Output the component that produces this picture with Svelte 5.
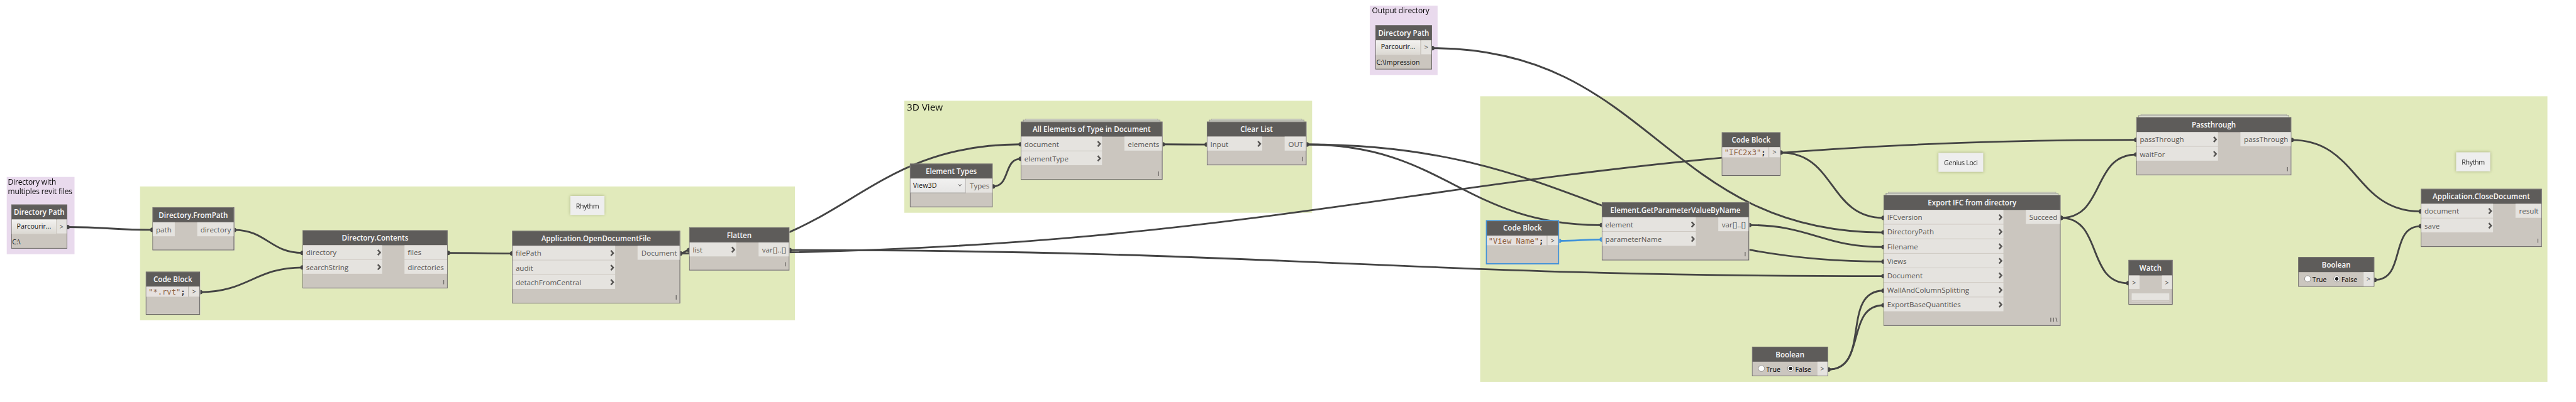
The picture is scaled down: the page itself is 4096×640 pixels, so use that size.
<script>
  // Graph coordinates; the stage scales them to the window.
  const W = 4598, H = 718;

  const groups = [
    { x: 12, y: 316, w: 121, h: 138, tone: 'lilac', title: 'Directory with\nmultiples revit files', pad: 2 },
    { x: 250, y: 333, w: 1169, h: 239, tone: 'green' },
    { x: 1614, y: 180, w: 728, h: 200, tone: 'green', title: '3D View', pad: 4.6, large: true },
    { x: 2445, y: 10, w: 121, h: 124, tone: 'lilac', title: 'Output directory', pad: 4 },
    { x: 2642, y: 172, w: 1905, h: 510, tone: 'green' }
  ];

  const notes = [
    { x: 1018, y: 350, w: 61, h: 34, text: 'Rhythm' },
    { x: 3460, y: 273, w: 80, h: 34, text: 'Genius Loci' },
    { x: 4384, y: 272, w: 61, h: 34, text: 'Rhythm' }
  ];

  const nodes = [
    { kind: 'path', title: 'Directory Path', x: 20, y: 365, w: 100, h: 79, value: 'C:\\' },
    { kind: 'fn', title: 'Directory.FromPath', x: 272, y: 370, w: 146, h: 77, ins: ['path'], inW: 39, outs: ['directory'], outW: 65, plain: true },
    { kind: 'code', title: 'Code Block', x: 260, y: 485, w: 97, h: 77, code: '"*.rvt"', codeW: 75, pad: 4 },
    { kind: 'fn', title: 'Directory.Contents', x: 540, y: 411, w: 259, h: 104, ins: ['directory', 'searchString'], inW: 141, outs: ['files', 'directories'], outW: 76 },
    { kind: 'fn', title: 'Application.OpenDocumentFile', x: 914, y: 412, w: 300, h: 130, ins: ['filePath', 'audit', 'detachFromCentral'], inW: 183, outs: ['Document'], outW: 75 },
    { kind: 'fn', title: 'Flatten', x: 1230, y: 406, w: 179, h: 77, ins: ['list'], inW: 83, outs: ['var[]..[]'], outW: 54 },
    { kind: 'fn', title: 'All Elements of Type in Document', x: 1822, y: 217, w: 253, h: 104, ins: ['document', 'elementType'], inW: 144, outs: ['elements'], outW: 67, stack: true },
    { kind: 'fn', title: 'Clear List', x: 2154, y: 217, w: 178, h: 78, ins: ['Input'], inW: 98, outs: ['OUT'], outW: 38, stack: true },
    { kind: 'select', title: 'Element Types', x: 1624, y: 292, w: 148, h: 78, value: 'View3D', out: 'Types' },
    { kind: 'path', title: 'Directory Path', x: 2455, y: 45, w: 101, h: 79, value: 'C:\\Impression' },
    { kind: 'code', title: 'Code Block', x: 2652, y: 393, w: 131, h: 79, code: '"View Name"', codeW: 107, pad: 2.7, selected: true },
    { kind: 'fn', title: 'Element.GetParameterValueByName', x: 2859, y: 361, w: 263, h: 104, ins: ['element', 'parameterName'], inW: 167, outs: ['var[]..[]'], outW: 54 },
    { kind: 'code', title: 'Code Block', x: 3073, y: 236, w: 105, h: 78, code: '"IFC2x3"', codeW: 83, pad: 3.8 },
    { kind: 'fn', title: 'Export IFC from directory', x: 3362, y: 348, w: 316, h: 234, ins: ['IFCversion', 'DirectoryPath', 'Filename', 'Views', 'Document', 'WallAndColumnSplitting', 'ExportBaseQuantities'], inW: 213, outs: ['Succeed'], outW: 61, stack: true, longest: true },
    { kind: 'bool', title: 'Boolean', x: 3127, y: 619, w: 136, h: 53 },
    { kind: 'fn', title: 'Passthrough', x: 3813, y: 209, w: 277, h: 104, ins: ['passThrough', 'waitFor'], inW: 145, outs: ['passThrough'], outW: 90, stack: true },
    { kind: 'watch', title: 'Watch', x: 3799, y: 464, w: 79, h: 80 },
    { kind: 'bool', title: 'Boolean', x: 4102, y: 459, w: 136, h: 53 },
    { kind: 'fn', title: 'Application.CloseDocument', x: 4321, y: 337, w: 216, h: 104, ins: ['document', 'save'], inW: 128, outs: ['result'], outW: 46 }
  ];

  const wires = [
    [120.5, 405.6, 272, 410.5],
    [418, 410.8, 540, 451.7],
    [357.5, 521.8, 540, 477.7],
    [799.5, 451.7, 914, 452.8],
    [1214, 452.8, 1230, 446.7],
    [1214, 452.8, 1822, 257.8],
    [1214, 452.8, 3813, 249.8],
    [1409.5, 446.7, 3362, 493.2],
    [1772.5, 333, 1822, 283.7],
    [2075.5, 257.8, 2154, 258.2],
    [2332.5, 258, 2859, 402],
    [2332.5, 258, 3362, 467.2],
    [2556.5, 86, 3362, 415.2],
    [2783, 430.2, 2859, 427.8, true],
    [3122.5, 402, 3362, 441.2],
    [3178.5, 272.5, 3362, 389.2],
    [3263.5, 660, 3362, 519.2],
    [3263.5, 660, 3362, 545.2],
    [3678.5, 389.2, 3813, 276],
    [3678.5, 389.2, 3799, 505.8],
    [4090.5, 250, 4321, 377.7],
    [4238.5, 500, 4321, 404]
  ];

  function curve([x0, y0, x1, y1]) {
    const o = 0.45 * Math.hypot(x1 - x0, y1 - y0);
    return `M${x0} ${y0}C${x0 + o} ${y0} ${x1 - o} ${y1} ${x1} ${y1}`;
  }
</script>

{#snippet port(label, side, chevron)}
  <div class="port {side}">
    <span>{label}</span>
    {#if chevron}
      <svg class="chev" width="8" height="12" viewBox="0 0 8 12"><path d="M1.4 1.4 5.6 6 1.4 10.6" /></svg>
    {/if}
  </div>
{/snippet}

<div class="window">
  <div class="stage" style="width:{W}px;height:{H}px">
    {#each groups as g}
      <div class="group {g.tone}" class:large={g.large} style="left:{g.x}px;top:{g.y}px;width:{g.w}px;height:{g.h}px;padding-left:{g.pad ?? 0}px">{g.title ?? ''}</div>
    {/each}

    <svg class="wires" width={W} height={H} viewBox="0 0 {W} {H}">
      {#each wires as w}
        <g class:active={w[4]}>
          <path d={curve(w)} />
          <circle cx={w[0]} cy={w[1]} r="4" />
          <circle cx={w[2]} cy={w[3]} r="4" />
        </g>
      {/each}
    </svg>

    {#each notes as n}
      <div class="note" style="left:{n.x}px;top:{n.y}px;width:{n.w}px;height:{n.h}px">{n.text}</div>
    {/each}

    {#each nodes as n}
      {#if n.stack}
        <div class="sheet back" style="left:{n.x + 8}px;top:{n.y - 5}px;width:{n.w - 16}px"></div>
        <div class="sheet" style="left:{n.x + 4}px;top:{n.y - 3}px;width:{n.w - 8}px"></div>
      {/if}
      <section class="node {n.kind}" class:selected={n.selected} style="left:{n.x}px;top:{n.y}px;width:{n.w}px;height:{n.h}px">
        <header>{n.title}</header>
        {#if n.kind === 'fn'}
          <div class="row">
            <div class="ports" style="width:{n.inW}px">
              {#each n.ins as p}{@render port(p, 'in', !n.plain)}{/each}
            </div>
            <div class="ports" style="width:{n.outW}px">
              {#each n.outs as p}{@render port(p, n.outs.length > 1 ? 'out many' : 'out', false)}{/each}
            </div>
          </div>
          {#if n.longest}
            <svg class="lacing" width="14" height="8" viewBox="0 0 14 8"><path d="M1.5 0V8M6.5 0V8M10.5 0 12.8 8" /></svg>
          {:else if !n.plain}
            <svg class="lacing" width="4" height="8" viewBox="0 0 4 8"><path d="M2 0V8" /></svg>
          {/if}
        {:else if n.kind === 'path'}
          <div class="row">
            <div class="browse">Parcourir...</div>
            <div class="pin">&gt;</div>
          </div>
          <div class="value">{n.value}</div>
        {:else if n.kind === 'code'}
          <div class="row">
            <div class="editor" style="width:{n.codeW}px;padding-left:{n.pad}px"><span>{n.code}</span><b>;</b></div>
            <div class="pin">&gt;</div>
          </div>
        {:else if n.kind === 'select'}
          <div class="row">
            <div class="drop">
              <span>{n.value}</span>
              <svg width="7" height="6" viewBox="0 0 7 6"><path d="M1 1 3.4 4.6 5.8 1" /></svg>
            </div>
            <div class="port out types"><span>{n.out}</span></div>
          </div>
        {:else if n.kind === 'bool'}
          <div class="row">
            <div class="choices">
              <i class="radio"></i><span class="t">True</span>
              <i class="radio on"></i><span>False</span>
            </div>
            <div class="pin">&gt;</div>
          </div>
        {:else}
          <div class="row">
            <div class="pin">&gt;</div>
            <div class="pin">&gt;</div>
          </div>
          <div class="output"></div>
        {/if}
      </section>
    {/each}
  </div>
</div>

<style>
  :global(body) { background: #fff; overflow: hidden; }
  .window { width: 4096px; height: 640px; overflow: hidden; background: #fff; }
  .stage {
    position: relative;
    transform: scale(0.89082, 0.89136);
    transform-origin: 0 0;
    font-family: "Open Sans", sans-serif;
    font-size: 13px;
  }
  .stage * { box-sizing: border-box; }
  .group { position: absolute; padding-top: 1px; color: #050505; font-size: 13.5px; line-height: 17px; letter-spacing: -0.17px; white-space: pre; }
  .group.large { padding-top: 1.6px; font-size: 17.2px; line-height: 20px; letter-spacing: 0; }
  .lilac { background: #e9daed; }
  .green { background: #e1eabb; }
  .wires { position: absolute; left: 0; top: 0; }
  .wires path { fill: none; stroke: #444; stroke-width: 3.2; }
  .wires circle { fill: #444; }
  .wires .active path { stroke: #4193d9; }
  .wires .active circle { fill: #4193d9; }

  .note {
    position: absolute; display: flex; align-items: center; justify-content: center;
    background: #eee; color: #222; font-size: 12px; letter-spacing: -0.38px;
    box-shadow: 0 0 5px rgba(90, 100, 50, 0.4);
    white-space: nowrap;
  }

  .sheet { position: absolute; height: 5px; background: #dddfd4; border: 1px solid #8c8d85; border-bottom: 0; }
  .sheet.back { border-color: #b4b7a3; }

  .node { position: absolute; background: #cbc6bf; border: 1px solid #5e5c5a; }
  .node.selected { border: 2px solid #4193d9; }
  header {
    height: 26px; padding-top: 0.6px; line-height: 25px;
    background: #5e5c5a; color: #fafafa; font-weight: 600; text-align: center; white-space: nowrap;
  }
  .selected header { padding-top: 0; line-height: 24px; }
  .watch header { height: 27px; }
  .row { display: flex; justify-content: space-between; align-items: flex-start; }
  .ports { display: flex; flex-direction: column; gap: 1px; }
  .port {
    display: flex; justify-content: space-between; height: 25px; padding: 0 1px 0 5.4px;
    line-height: 26.6px; background: #e5e3df; color: #575553; white-space: nowrap;
  }
  .port.out { justify-content: flex-end; padding: 0 4.8px 0 0; }
  .port.many { justify-content: flex-start; padding-left: 5.6px; }
  .port.types { width: 47px; }
  .chev { margin-top: 6.5px; }
  .chev path { fill: none; stroke: #575553; stroke-width: 2.8; }
  .lacing { position: absolute; right: 4.5px; bottom: 6.5px; }
  .lacing path { fill: none; stroke: #6e6b68; stroke-width: 1.5; }

  .pin {
    width: 18.5px; height: 25px; line-height: 25px; text-align: center; font-size: 12px;
    background: #e5e3df; color: #4a4846;
  }
  .browse {
    width: 79px; height: 26px; line-height: 24.5px; text-align: center; font-size: 12px; color: #111;
    background: linear-gradient(#f3f2f0, #dbd8d2);
  }
  .value { padding-left: 0.6px; line-height: 27px; font-size: 12px; color: #111; white-space: nowrap; }

  .editor {
    height: 18px; line-height: 19.6px; background: #e6e1df; color: #333; flex: none;
    font-family: "DejaVu Sans Mono", monospace; font-size: 13.65px; white-space: nowrap;
  }
  .editor span { color: #8f6142; }
  .code .pin { flex: 1; height: 17.5px; line-height: 17px; margin-left: 1px; box-shadow: -1px 0 #b5b0aa; background: #e6e3df; }
  .selected .editor, .selected .pin { height: 17px; }

  .drop {
    display: flex; justify-content: space-between; width: 99px; height: 26px; padding: 0 6px 0 4.6px;
    line-height: 23px; font-size: 12px; letter-spacing: 0.15px; color: #111;
    background: linear-gradient(#f1f1f0, #e7e6e5); border-right: 1px solid #b4b2b0; border-bottom: 1px solid #aaa8a6;
  }
  .drop svg { margin-top: 9px; }
  .drop path { fill: none; stroke: #555; stroke-width: 1.1; }

  .choices { display: flex; align-items: center; height: 25px; padding-left: 10px; font-size: 12px; line-height: 27px; color: #000; }
  .choices .t { width: 40px; }
  .choices span { padding: 2px 0 0 2.4px; }
  .radio { width: 12px; height: 12px; margin-bottom: 2px; border: 1px solid #8a8886; border-radius: 50%; background: #fff; }
  .radio.on { background: radial-gradient(circle, #222 0 2.8px, #fff 3.4px); }

  .watch .pin { height: 24px; }
  .output { height: 12px; margin: 8px 5px 0; background: #e5e3df; box-shadow: 0 2px #cbc6bf, 0 3.5px #d6d2cd; }
</style>
